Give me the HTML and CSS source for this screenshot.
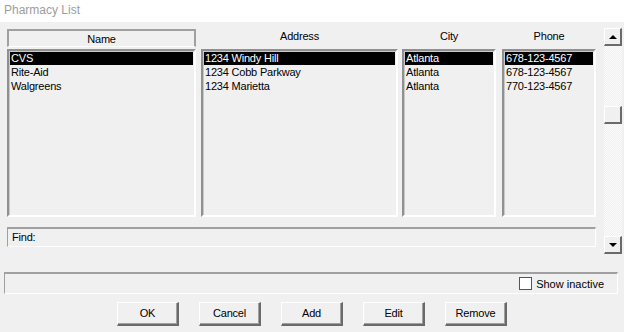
FILE: index.html
```html
<!DOCTYPE html>
<html lang="en">
<head>
    <meta charset="UTF-8">
    <title>Pharmacy List</title>
    <link rel="stylesheet" href="styles.css">
</head>
<body>
<div class="title">Pharmacy List</div>
<div class="panel">
    <div class="left">
        <div class="cols">
            <div class="col col-name">
                <div class="head head-active">Name</div>
                <div class="list">
                    <div class="row sel">CVS</div>
                    <div class="row">Rite-Aid</div>
                    <div class="row">Walgreens</div>
                </div>
            </div>
            <div class="col col-addr">
                <div class="head">Address</div>
                <div class="list">
                    <div class="row sel">1234 Windy Hill</div>
                    <div class="row">1234 Cobb Parkway</div>
                    <div class="row">1234 Marietta</div>
                </div>
            </div>
            <div class="col col-city">
                <div class="head">City</div>
                <div class="list">
                    <div class="row sel">Atlanta</div>
                    <div class="row">Atlanta</div>
                    <div class="row">Atlanta</div>
                </div>
            </div>
            <div class="col col-phone">
                <div class="head">Phone</div>
                <div class="list">
                    <div class="row sel">678-123-4567</div>
                    <div class="row">678-123-4567</div>
                    <div class="row">770-123-4567</div>
                </div>
            </div>
        </div>
        <div class="find">Find:</div>
    </div>
    <div class="scroll">
        <div class="sbtn"><span class="arrow-up"></span></div>
        <div class="track"><div class="thumb"></div></div>
        <div class="sbtn"><span class="arrow-down"></span></div>
    </div>
</div>
<div class="status">
    <label class="check"><span class="box"></span>Show inactive</label>
</div>
<div class="buttons">
    <div class="btn">OK</div>
    <div class="btn">Cancel</div>
    <div class="btn">Add</div>
    <div class="btn">Edit</div>
    <div class="btn">Remove</div>
</div>
</body>
</html>
```

FILE: styles.css
```css
body {
    margin: 0;
    background: #f0f0f0;
    font-family: "Liberation Sans", Arial, sans-serif;
    font-size: 11px;
    letter-spacing: -0.2px;
    color: #000;
}
.title {
    height: 22px;
    background: #fff;
    color: #9c9c9c;
    font-size: 12px;
    letter-spacing: 0;
    line-height: 20px;
    padding-left: 4px;
}
.panel {
    display: flex;
    padding: 7px 0 0 7px;
}
.left {
    width: 589px;
}
.cols {
    display: flex;
}
.col-name { width: 189px; }
.col-addr { width: 197px; margin-left: 5px; }
.col-city { width: 94px; margin-left: 4px; }
.col-phone { width: 94px; margin-left: 6px; }
.head {
    height: 18px;
    margin-bottom: 2px;
    line-height: 14px;
    text-align: center;
    box-sizing: border-box;
}
.head-active {
    border-top: 2px solid #a0a0a0;
    border-left: 2px solid #a0a0a0;
    border-right: 2px solid #a0a0a0;
    border-bottom: 1px solid #fff;
    padding-top: 1px;
}
.list {
    height: 168px;
    box-sizing: border-box;
    border-top: 2px solid #909090;
    border-left: 2px solid #909090;
    border-right: 2px solid #fff;
    border-bottom: 2px solid #fff;
    box-shadow: inset 1px 1px 0 #c8c8c8;
    padding: 0 1px;
}
.row {
    height: 14px;
    line-height: 14px;
    padding-left: 1px;
    white-space: nowrap;
}
.row.sel {
    background: #000;
    color: #fff;
    margin-top: 1px;
    height: 13px;
    line-height: 13px;
}
.find {
    margin-top: 10px;
    height: 20px;
    box-sizing: border-box;
    border-top: 2px solid #a0a0a0;
    border-left: 1px solid #a0a0a0;
    border-right: 1px solid #fff;
    border-bottom: 1px solid #fff;
    padding-left: 4px;
    line-height: 16px;
}
.scroll {
    width: 18px;
    height: 226px;
    margin-top: -1px;
    margin-left: 8px;
    display: flex;
    flex-direction: column;
}
.sbtn, .thumb {
    width: 18px;
    height: 18px;
    box-sizing: border-box;
    background: #f0f0f0;
    border-top: 1px solid #fff;
    border-left: 1px solid #fff;
    border-right: 2px solid #6a6a6a;
    border-bottom: 2px solid #6a6a6a;
    display: flex;
    align-items: center;
    justify-content: center;
}
.thumb {
    margin-top: 60px;
}
.track {
    flex: 1;
    background: repeating-conic-gradient(#f0f0f0 0 25%, #fbfbfb 0 50%) 0 0 / 2px 2px;
}
.arrow-up {
    width: 0;
    height: 0;
    border-left: 4px solid transparent;
    border-right: 4px solid transparent;
    border-bottom: 4px solid #000;
}
.arrow-down {
    width: 0;
    height: 0;
    border-left: 4px solid transparent;
    border-right: 4px solid transparent;
    border-top: 4px solid #000;
}
.status {
    margin: 18px 6px 0 4px;
    height: 22px;
    box-sizing: border-box;
    border-top: 2px solid #a0a0a0;
    border-left: 1px solid #a0a0a0;
    border-right: 1px solid #fff;
    border-bottom: 1px solid #fff;
    display: flex;
    justify-content: flex-end;
    align-items: center;
    padding-right: 13px;
}
.check {
    display: flex;
    align-items: center;
    letter-spacing: 0;
}
.box {
    width: 11px;
    height: 11px;
    border: 1px solid #555;
    background: #fff;
    margin-right: 4px;
}
.buttons {
    display: flex;
    gap: 20px;
    margin-top: 8px;
    padding-left: 117px;
}
.btn {
    width: 62px;
    height: 24px;
    box-sizing: border-box;
    border-top: 1px solid #fff;
    border-left: 1px solid #fff;
    border-right: 2px solid #6a6a6a;
    border-bottom: 2px solid #6a6a6a;
    box-shadow: inset -1px -1px 0 #a0a0a0;
    text-align: center;
    line-height: 20px;
}
```
